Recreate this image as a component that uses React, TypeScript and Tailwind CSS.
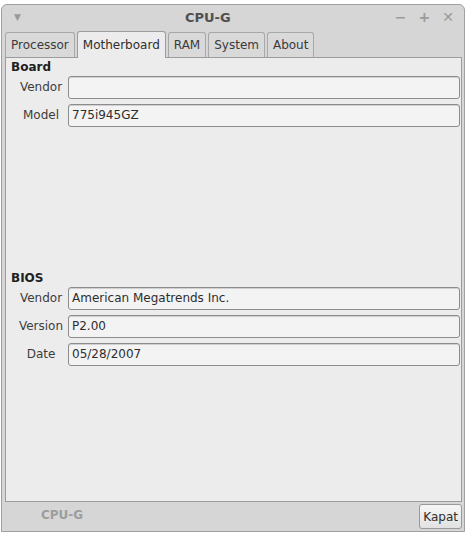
import React from "react";

const font = { fontFamily: '"DejaVu Sans", "Liberation Sans", sans-serif' };

function Field({ label, value }: { label: string; value: string }) {
  return (
    <div className="flex items-center h-[28px]">
      <div className="w-[62px] text-center text-[12px] text-[#3c3c3c] pl-[8px]">{label}</div>
      <div className="flex-1 h-[23px] mr-[1px] rounded-[3px] border border-[#8c8c8c] bg-[#f3f3f3] shadow-[inset_0_1px_0_#d0d0d0] flex items-center px-[3px] text-[12px] text-[#2e2e2e]">
        {value}
      </div>
    </div>
  );
}

export default function App() {
  const tabs = ["Processor", "Motherboard", "RAM", "System", "About"];

  return (
    <div className="w-[466px] h-[535px] bg-white pt-[4px] pl-[1px]" style={font}>
      <div className="w-[464px] h-[528px] rounded-t-[6px] border border-[#a0a0a0] bg-[#d6d6d6] flex flex-col">
        {/* title bar */}
        <div className="h-[25px] flex items-center shrink-0">
          <span className="ml-[12px] text-[9px] text-[#9a9a9a]">▼</span>
          <div className="flex-1 text-center text-[13px] font-bold text-[#505050]">CPU-G</div>
          <div className="flex items-center gap-[12px] mr-[10px] text-[#9a9a9a] text-[14px] font-bold">
            <span>−</span>
            <span>+</span>
            <span>✕</span>
          </div>
        </div>

        {/* tabs */}
        <div className="flex items-end h-[27px] pl-[3px] gap-[2px] shrink-0">
          {tabs.map((t) =>
            t === "Motherboard" ? (
              <div
                key={t}
                className="h-[27px] px-[5px] -mb-[1px] relative z-10 rounded-t-[3px] border border-b-0 border-[#9c9c9c] bg-[#ececec] text-[12px] text-[#2e2e2e] flex items-center"
              >
                {t}
              </div>
            ) : (
              <div
                key={t}
                className="h-[25px] px-[5px] rounded-t-[3px] border border-b-0 border-[#a8a8a8] bg-[#d9d9d9] text-[12px] text-[#3a3a3a] flex items-center"
              >
                {t}
              </div>
            )
          )}
        </div>

        {/* panel */}
        <div className="ml-[3px] mr-[2px] h-[445px] border border-[#9c9c9c] bg-[#ececec] flex flex-col shrink-0">
          <div className="pl-[5px] text-[12px] font-bold text-[#1e1e1e] h-[15px] leading-[18px]">Board</div>
          <Field label="Vendor" value="" />
          <Field label="Model" value="775i945GZ" />
          <div className="h-[140px]" />
          <div className="pl-[5px] text-[12px] font-bold text-[#1e1e1e] h-[15px] leading-[19px]">BIOS</div>
          <Field label="Vendor" value="American Megatrends Inc." />
          <Field label="Version" value="P2.00" />
          <Field label="Date" value="05/28/2007" />
        </div>

        {/* bottom */}
        <div className="flex-1 flex items-center">
          <div className="ml-[39px] -mt-[3px] text-[12px] font-bold text-[#9d9d9d]">CPU-G</div>
          <div className="flex-1" />
          <div className="mr-[2px] h-[25px] px-[3px] rounded-[3px] border border-[#9a9a9a] bg-gradient-to-b from-[#f6f6f6] to-[#e2e2e2] text-[12px] text-[#2e2e2e] flex items-center">
            Kapat
          </div>
        </div>
      </div>
    </div>
  );
}
